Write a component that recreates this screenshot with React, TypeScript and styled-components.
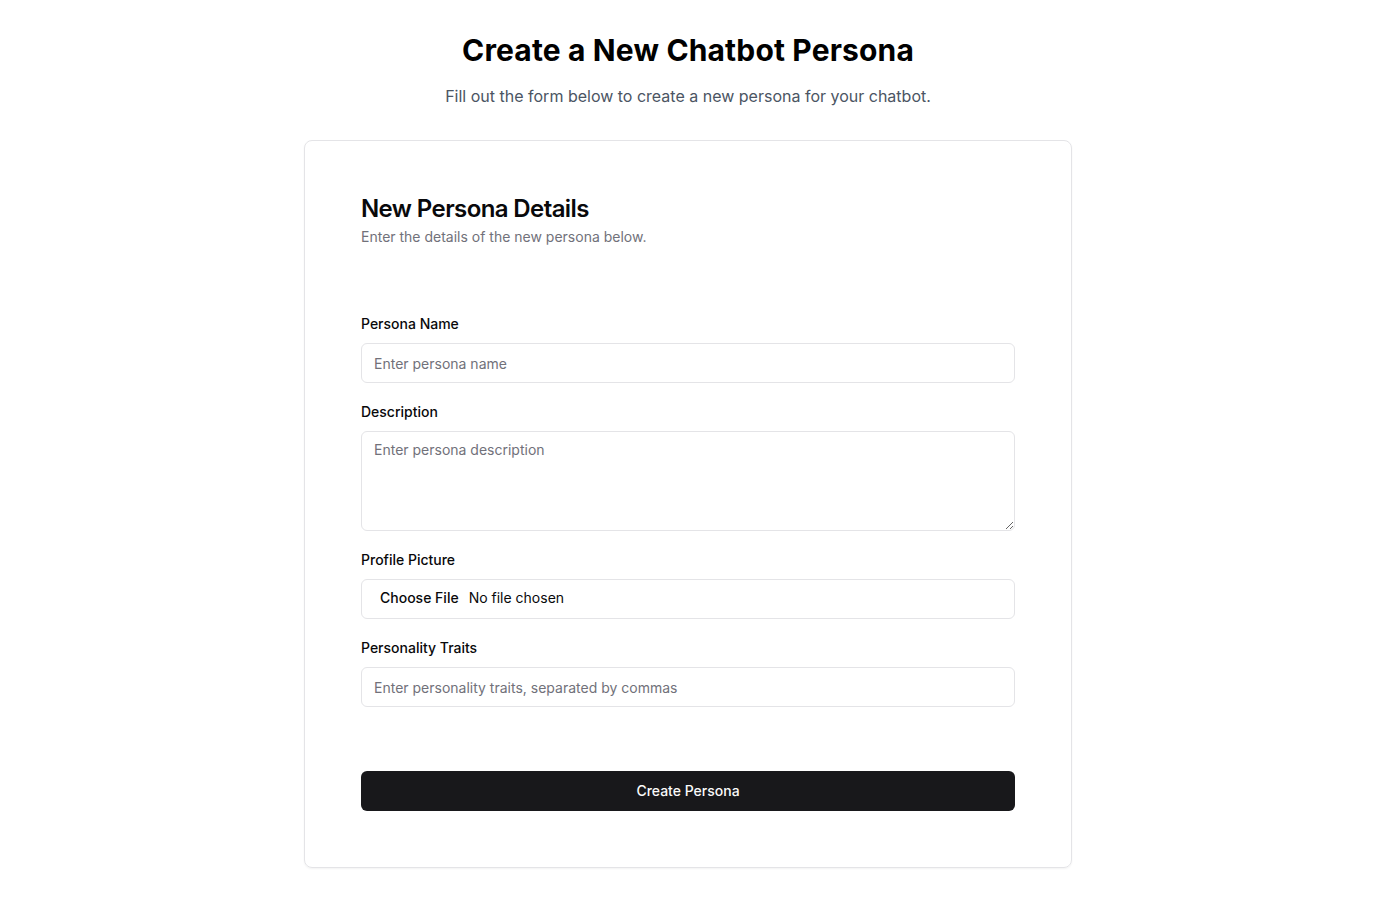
import React from "react";
import styled, { createGlobalStyle } from "styled-components";

const GlobalStyle = createGlobalStyle`
  * { box-sizing: border-box; }
  body {
    margin: 0;
    background: #ffffff;
    font-family: Inter, "Noto Sans", sans-serif;
    color: #09090b;
  }
`;

const Page = styled.main`
  display: flex;
  flex-direction: column;
  align-items: center;
  padding: 32px 16px 32px;
`;

const Title = styled.h1`
  margin: 0;
  font-size: 30px;
  line-height: 36px;
  font-weight: 700;
  letter-spacing: 0.15px;
  color: #000;
`;

const Subtitle = styled.p`
  margin: 16px 0 0;
  font-size: 16px;
  line-height: 24px;
  color: #4b5563;
`;

const Card = styled.section`
  margin-top: 32px;
  width: 768px;
  border: 1px solid #e4e4e7;
  border-radius: 8px;
  box-shadow: 0 1px 2px rgba(0, 0, 0, 0.05);
  padding: 56px;
  display: flex;
  flex-direction: column;
`;

const CardHeader = styled.div`
  display: flex;
  flex-direction: column;
  gap: 6px;
`;

const CardTitle = styled.h2`
  margin: 0;
  font-size: 24px;
  line-height: 24px;
  font-weight: 600;
  letter-spacing: -0.6px;
  color: #09090b;
`;

const CardDescription = styled.p`
  margin: 0;
  font-size: 14px;
  line-height: 20px;
  color: #71717a;
`;

const Form = styled.form`
  margin-top: 66px;
  display: flex;
  flex-direction: column;
  gap: 18px;
`;

const Field = styled.div`
  display: flex;
  flex-direction: column;
  gap: 9px;
`;

const Label = styled.label`
  padding-top: 1px;
  font-size: 14px;
  line-height: 20px;
  font-weight: 500;
  color: #09090b;
`;

const fieldBase = `
  width: 100%;
  border: 1px solid #e4e4e7;
  border-radius: 6px;
  background: #fff;
  font-family: Inter, "Noto Sans", sans-serif;
  font-size: 14px;
  color: #09090b;
  outline: none;
  &::placeholder { color: #71717a; }
`;

const Input = styled.input`
  ${fieldBase}
  height: 40px;
  padding: 8px 12px;
`;

const TextArea = styled.textarea`
  ${fieldBase}
  height: 100px;
  padding: 8px 12px;
  line-height: 20px;
  resize: vertical;
  display: block;
`;

const FileInput = styled.input`
  ${fieldBase}
  height: 40px;
  padding: 8px 12px;
  &::file-selector-button {
    border: 0;
    background: transparent;
    font-family: Inter, "Noto Sans", sans-serif;
    font-size: 14px;
    font-weight: 500;
    color: #09090b;
  }
`;

const SubmitButton = styled.button`
  margin-top: 46px;
  height: 40px;
  width: 100%;
  padding: 0 16px 2px;
  border: 0;
  border-radius: 6px;
  background: #18181b;
  color: #fafafa;
  font-family: Inter, "Noto Sans", sans-serif;
  font-size: 14px;
  font-weight: 500;
  cursor: pointer;
`;

export default function App() {
  return (
    <>
      <GlobalStyle />
      <Page>
        <Title>Create a New Chatbot Persona</Title>
        <Subtitle>Fill out the form below to create a new persona for your chatbot.</Subtitle>
        <Card>
          <CardHeader>
            <CardTitle>New Persona Details</CardTitle>
            <CardDescription>Enter the details of the new persona below.</CardDescription>
          </CardHeader>
          <Form onSubmit={(e) => e.preventDefault()}>
            <Field>
              <Label htmlFor="name">Persona Name</Label>
              <Input id="name" placeholder="Enter persona name" />
            </Field>
            <Field>
              <Label htmlFor="description">Description</Label>
              <TextArea id="description" placeholder="Enter persona description" />
            </Field>
            <Field>
              <Label htmlFor="picture">Profile Picture</Label>
              <FileInput id="picture" type="file" />
            </Field>
            <Field>
              <Label htmlFor="traits">Personality Traits</Label>
              <Input id="traits" placeholder="Enter personality traits, separated by commas" />
            </Field>
            <SubmitButton type="submit">Create Persona</SubmitButton>
          </Form>
        </Card>
      </Page>
    </>
  );
}
